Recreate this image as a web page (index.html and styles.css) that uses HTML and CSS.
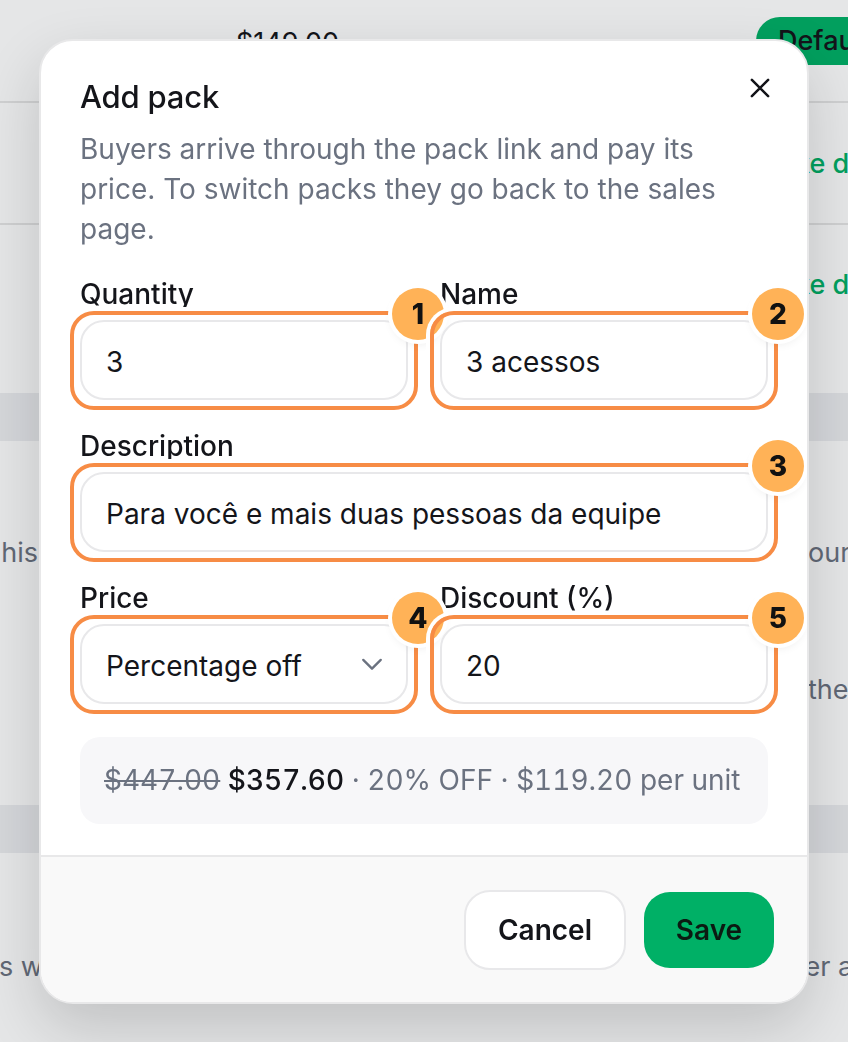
FILE: index.html
```html
<!DOCTYPE html>
<html lang="en">
<head>
<meta charset="utf-8">
<title>Add pack</title>
<link rel="stylesheet" href="styles.css">
</head>
<body>
<main class="page">
  <section class="card card-top">
    <div class="row row-first"><span class="price">$149.00</span><span class="badge-default">Default</span></div>
    <div class="row row-second"><span></span><span class="make">Make default</span></div>
    <div class="row row-third"><span></span><span class="make">Make default</span></div>
  </section>
  <section class="card card-mid">
    <div class="bgline"><span class="bg-left">his</span><span class="bg-right">our team</span></div>
    <div class="bgline bgline-next"><span class="bg-left"></span><span class="bg-right">the link</span></div>
  </section>
  <section class="card card-end">
    <div class="bgline"><span class="bg-left bg-start">s with</span><span class="bg-right bg-under">per access</span></div>
  </section>
</main>
<div class="overlay"></div>
<div class="modal">
  <div class="modal-body">
    <div class="modal-head">
      <h2 class="title">Add pack</h2>
      <svg class="close" viewBox="0 0 24 24" width="30" height="30"><path d="M5.5 5.5l13 13M18.5 5.5l-13 13"/></svg>
    </div>
    <p class="desc">Buyers arrive through the pack link and pay its price. To switch packs they go back to the sales page.</p>
    <div class="form">
      <div class="fieldset">
        <div class="label">Quantity</div>
        <div class="hold"><div class="input">3</div><div class="hl"></div><div class="num">1</div></div>
      </div>
      <div class="fieldset">
        <div class="label">Name</div>
        <div class="hold"><div class="input">3 acessos</div><div class="hl"></div><div class="num">2</div></div>
      </div>
      <div class="fieldset wide">
        <div class="label">Description</div>
        <div class="hold"><div class="input">Para você e mais duas pessoas da equipe</div><div class="hl"></div><div class="num">3</div></div>
      </div>
      <div class="fieldset">
        <div class="label">Price</div>
        <div class="hold"><div class="input select">Percentage off<svg class="chev" viewBox="0 0 24 24" width="28" height="28"><path d="M4.5 8.5l7.5 7.5 7.5-7.5"/></svg></div><div class="hl"></div><div class="num">4</div></div>
      </div>
      <div class="fieldset">
        <div class="label">Discount (%)</div>
        <div class="hold"><div class="input">20</div><div class="hl"></div><div class="num">5</div></div>
      </div>
    </div>
    <div class="summary"><s>$447.00</s> <b>$357.60</b> · 20% OFF · $119.20 per unit</div>
  </div>
  <div class="modal-foot">
    <div class="btn btn-cancel">Cancel</div>
    <div class="btn btn-save">Save</div>
  </div>
</div>
</body>
</html>
```
FILE: styles.css
```css
* { box-sizing: border-box; }
html, body { margin: 0; height: 100%; overflow: hidden; }
body { background: #edeef1; font-family: Inter, "Liberation Sans", sans-serif; color: #14151a; }

.page { width: 848px; height: 1042px; overflow: hidden; }
.card { background: #fff; margin-bottom: 48px; overflow: hidden; }
.card-top { height: 393px; }
.card-mid { height: 364px; padding-top: 92px; }
.card-end { height: 189px; padding-top: 94px; margin-bottom: 0; }

.row { display: grid; grid-template-columns: 755px auto; border-bottom: 2px solid #e6e6e6; font-size: 27px; }
.row-first { height: 103px; padding-top: 17px; }
.row-second { height: 122px; padding-top: 41px; }
.row-third { height: 168px; padding-top: 40px; border-bottom: 0; }
.price { padding-left: 236px; line-height: 52px; white-space: nowrap; }
.badge-default { width: 160px; height: 48px; line-height: 48px; background: #00b066; border-radius: 24px; margin-left: 1px; padding-left: 22px; font-weight: 500; }
.make { color: #00b066; font-weight: 500; line-height: 40px; white-space: nowrap; }

.bgline { display: grid; grid-template-columns: 38px 770px 200px; height: 40px; line-height: 40px; font-size: 27px; color: #6b7280; white-space: nowrap; }
.bgline-next { margin-top: 97px; }
.bg-left { display: flex; justify-content: flex-end; }
.bg-start { justify-content: flex-start; margin-left: -1px; }
.bg-right { grid-column: 3; }
.bg-under { margin-left: -20px; }

.overlay { position: fixed; inset: 0; background: rgba(17, 24, 39, .11); }
.modal { position: fixed; left: 39px; top: 39px; width: 770px; height: 965px; background: #fff; border: 2px solid #e8e8e9; border-radius: 34px; overflow: hidden; box-shadow: 0 24px 60px rgba(0, 0, 0, .16); display: flex; flex-direction: column; }
.modal-body { flex: 1; padding: 39px 39px 0; }
.modal-head { display: flex; justify-content: space-between; align-items: flex-start; }
.title { margin: 0; font-size: 31px; line-height: 34px; font-weight: 500; letter-spacing: -.2px; }
.close { margin: -7px -7px 0 0; }
.close path { fill: none; stroke: #14151a; stroke-width: 2; stroke-linecap: round; }
.desc { margin: 15px 0 0; font-size: 28px; line-height: 40px; color: #6b7280; }

.form { display: grid; grid-template-columns: 328px 328px; column-gap: 32px; row-gap: 30px; margin-top: 29px; }
.wide { grid-column: 1 / 3; }
.label { height: 42px; line-height: 32px; font-size: 28px; font-weight: 500; }
.hold { position: relative; }
.input { height: 80px; display: flex; align-items: center; justify-content: space-between; padding: 3px 24px 0; border: 2px solid #e8e8ea; border-radius: 24px; font-size: 28px; background: #fff; }
.chev { margin-right: -4px; margin-top: -3px; }
.chev path { fill: none; stroke: #6b7280; stroke-width: 2; stroke-linecap: round; stroke-linejoin: round; }
.hl { position: absolute; inset: -9px -10px -10px; border: 4px solid #f78c45; border-radius: 24px; box-shadow: 0 0 0 4px #fff; pointer-events: none; }
.num { position: absolute; top: -32px; right: -36px; width: 52px; height: 52px; line-height: 52px; border-radius: 50%; background: #ffb257; font-size: 28px; font-weight: 800; text-align: center; color: #111; box-shadow: 0 0 0 4px #fff, 0 4px 10px rgba(0, 0, 0, .08); }

.summary { margin-top: 33px; height: 87px; padding: 0 24px; line-height: 87px; white-space: pre; background: #f7f7f9; border-radius: 20px; font-size: 28px; font-variant-numeric: tabular-nums; color: #6b7280; }
.summary b { font-weight: 500; color: #14151a; }

.modal-foot { height: 147px; background: #f9f9f9; border-top: 2px solid #e8e8e9; display: flex; justify-content: flex-end; align-items: flex-start; gap: 18px; padding: 33px 33px 0 0; }
.btn { font-size: 28px; font-weight: 600; display: flex; align-items: center; justify-content: center; border-radius: 26px; }
.btn-cancel { width: 162px; height: 80px; background: #fff; border: 2px solid #e8e8ea; }
.btn-save { width: 130px; height: 76px; margin-top: 2px; background: #00b066; color: #0b1a12; }
```
